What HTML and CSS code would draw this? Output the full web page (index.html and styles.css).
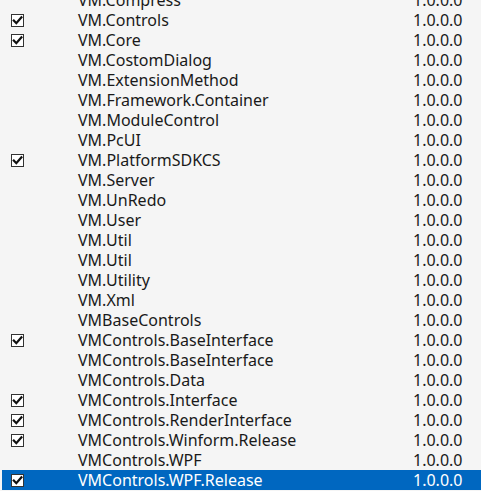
FILE: index.html
```html
<!DOCTYPE html>
<html>
<head>
<meta charset="utf-8">
<link rel="stylesheet" href="styles.css">
</head>
<body>
<div class="list">
  <div class="row"><span class="cb"></span><span class="name">VM.Compress</span><span class="ver">1.0.0.0</span></div>
  <div class="row"><span class="cb on"><svg viewBox="0 0 11 11"><polyline points="1.8,5.6 4.3,8.2 9.4,2.3"/></svg></span><span class="name">VM.Controls</span><span class="ver">1.0.0.0</span></div>
  <div class="row"><span class="cb on"><svg viewBox="0 0 11 11"><polyline points="1.8,5.6 4.3,8.2 9.4,2.3"/></svg></span><span class="name">VM.Core</span><span class="ver">1.0.0.0</span></div>
  <div class="row"><span class="cb"></span><span class="name">VM.CostomDialog</span><span class="ver">1.0.0.0</span></div>
  <div class="row"><span class="cb"></span><span class="name">VM.ExtensionMethod</span><span class="ver">1.0.0.0</span></div>
  <div class="row"><span class="cb"></span><span class="name">VM.Framework.Container</span><span class="ver">1.0.0.0</span></div>
  <div class="row"><span class="cb"></span><span class="name">VM.ModuleControl</span><span class="ver">1.0.0.0</span></div>
  <div class="row"><span class="cb"></span><span class="name">VM.PcUI</span><span class="ver">1.0.0.0</span></div>
  <div class="row"><span class="cb on"><svg viewBox="0 0 11 11"><polyline points="1.8,5.6 4.3,8.2 9.4,2.3"/></svg></span><span class="name">VM.PlatformSDKCS</span><span class="ver">1.0.0.0</span></div>
  <div class="row"><span class="cb"></span><span class="name">VM.Server</span><span class="ver">1.0.0.0</span></div>
  <div class="row"><span class="cb"></span><span class="name">VM.UnRedo</span><span class="ver">1.0.0.0</span></div>
  <div class="row"><span class="cb"></span><span class="name">VM.User</span><span class="ver">1.0.0.0</span></div>
  <div class="row"><span class="cb"></span><span class="name">VM.Util</span><span class="ver">1.0.0.0</span></div>
  <div class="row"><span class="cb"></span><span class="name">VM.Util</span><span class="ver">1.0.0.0</span></div>
  <div class="row"><span class="cb"></span><span class="name">VM.Utility</span><span class="ver">1.0.0.0</span></div>
  <div class="row"><span class="cb"></span><span class="name">VM.Xml</span><span class="ver">1.0.0.0</span></div>
  <div class="row"><span class="cb"></span><span class="name">VMBaseControls</span><span class="ver">1.0.0.0</span></div>
  <div class="row"><span class="cb on"><svg viewBox="0 0 11 11"><polyline points="1.8,5.6 4.3,8.2 9.4,2.3"/></svg></span><span class="name">VMControls.BaseInterface</span><span class="ver">1.0.0.0</span></div>
  <div class="row"><span class="cb"></span><span class="name">VMControls.BaseInterface</span><span class="ver">1.0.0.0</span></div>
  <div class="row"><span class="cb"></span><span class="name">VMControls.Data</span><span class="ver">1.0.0.0</span></div>
  <div class="row"><span class="cb on"><svg viewBox="0 0 11 11"><polyline points="1.8,5.6 4.3,8.2 9.4,2.3"/></svg></span><span class="name">VMControls.Interface</span><span class="ver">1.0.0.0</span></div>
  <div class="row"><span class="cb on"><svg viewBox="0 0 11 11"><polyline points="1.8,5.6 4.3,8.2 9.4,2.3"/></svg></span><span class="name">VMControls.RenderInterface</span><span class="ver">1.0.0.0</span></div>
  <div class="row"><span class="cb on"><svg viewBox="0 0 11 11"><polyline points="1.8,5.6 4.3,8.2 9.4,2.3"/></svg></span><span class="name">VMControls.Winform.Release</span><span class="ver">1.0.0.0</span></div>
  <div class="row"><span class="cb"></span><span class="name">VMControls.WPF</span><span class="ver">1.0.0.0</span></div>
  <div class="row sel"><span class="cb on"><svg viewBox="0 0 11 11"><polyline points="1.8,5.6 4.3,8.2 9.4,2.3"/></svg></span><span class="name">VMControls.WPF.Release</span><span class="ver">1.0.0.0</span></div>
</div>
</body>
</html>
```
FILE: styles.css
```css
html, body {
  margin: 0;
  padding: 0;
  background: #f5f5f5;
  overflow: hidden;
}
body {
  font-family: "Noto Sans", "Open Sans", sans-serif;
  font-size: 16px;
  color: #1a1a1a;
}
.list {
  margin-top: -10px;
  padding-left: 2px;
}
.row {
  height: 20px;
  display: flex;
  align-items: center;
  line-height: 20px;
}
.row.sel {
  background: #0067c0;
  color: #ffffff;
}
.cb {
  width: 13px;
  height: 13px;
  margin-left: 9px;
  flex: none;
  box-sizing: border-box;
  display: flex;
}
.cb.on {
  border: 1px solid #333333;
  background: #ffffff;
}
.cb svg {
  width: 11px;
  height: 11px;
}
.cb polyline {
  fill: none;
  stroke: #111111;
  stroke-width: 2.2;
  stroke-linecap: square;
  stroke-linejoin: miter;
}
.name {
  margin-left: 54px;
  width: 335px;
  flex: none;
  white-space: nowrap;
}
.ver {
  flex: none;
}
```
